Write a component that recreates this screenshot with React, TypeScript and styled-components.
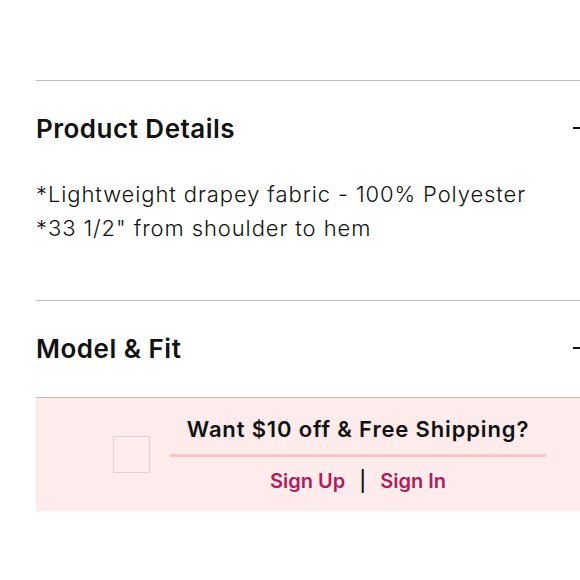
import React from 'react';
import styled, { createGlobalStyle } from 'styled-components';

const GlobalStyle = createGlobalStyle`
  html, body {
    margin: 0;
    padding: 0;
    background: #ffffff;
    overflow: hidden;
  }
  body {
    font-family: Inter, "Liberation Sans", sans-serif;
    color: #111111;
  }
`;

interface Section {
  title: string;
  lines?: string[];
}

const sections: Section[] = [
  {
    title: 'Product Details',
    lines: ['*Lightweight drapey fabric - 100% Polyester', '*33 1/2" from shoulder to hem'],
  },
  { title: 'Model & Fit' },
];

const App: React.FC = () => {
  return (
    <>
      <GlobalStyle />
      <Page>
        <Panel>
          {sections.map((s) => (
            <AccordionItem key={s.title}>
              <Header>
                <Title>{s.title}</Title>
                <Minus />
              </Header>
              {s.lines && (
                <Body>
                  {s.lines.map((l) => (
                    <Line key={l}>{l}</Line>
                  ))}
                </Body>
              )}
            </AccordionItem>
          ))}
          <Promo>
            <Checkbox />
            <PromoColumn>
              <PromoTitle>Want $10 off &amp; Free Shipping?</PromoTitle>
              <PromoRule />
              <Links>
                <LinkText>Sign Up</LinkText>
                <Pipe>|</Pipe>
                <LinkText>Sign In</LinkText>
              </Links>
            </PromoColumn>
          </Promo>
        </Panel>
      </Page>
    </>
  );
};

export default App;

// Styled Components

const Page = styled.div`
  padding-top: 80px;
  width: 580px;
  height: 580px;
  box-sizing: border-box;
  overflow: hidden;
`;

const Panel = styled.div`
  margin-left: 36px;
  width: 552px;
`;

const AccordionItem = styled.section`
  border-top: 1.5px solid #bdbcbb;
`;

const Header = styled.div`
  display: flex;
  align-items: center;
  justify-content: space-between;
  height: 96px;
  padding-bottom: 2px;
  box-sizing: border-box;
`;

const Title = styled.h3`
  margin: 0;
  font-size: 26px;
  font-weight: 600;
  letter-spacing: 0.5px;
`;

const Minus = styled.span`
  width: 12px;
  height: 2px;
  background: #111111;
  margin-right: 3px;
`;

const Body = styled.div`
  padding-bottom: 55px;
`;

const Line = styled.p`
  margin: 0;
  font-size: 22px;
  font-weight: 300;
  line-height: 34px;
  letter-spacing: 0.9px;
`;

const Promo = styled.div`
  display: flex;
  align-items: center;
  gap: 20px;
  height: 113px;
  padding-left: 77px;
  border-top: 1.5px solid #bdbcbb;
  background: #fdeceb;
`;

const Checkbox = styled.div`
  width: 35px;
  height: 35px;
  border: 1px solid #e2cfcf;
  background: #fdeceb;
  flex-shrink: 0;
`;

const PromoColumn = styled.div`
  width: 376px;
  display: flex;
  flex-direction: column;
  align-items: center;
`;

const PromoTitle = styled.div`
  font-size: 22px;
  font-weight: 600;
  line-height: 30px;
  letter-spacing: 0.85px;
`;

const PromoRule = styled.div`
  align-self: stretch;
  height: 3px;
  background: #f5c9c2;
  margin: 10px 0 10px;
`;

const Links = styled.div`
  display: flex;
  align-items: center;
  gap: 14px;
  font-size: 20px;
  line-height: 28px;
  font-weight: 600;
`;

const LinkText = styled.span`
  color: #b01d58;
`;

const Pipe = styled.span`
  color: #111111;
  font-weight: 500;
`;
